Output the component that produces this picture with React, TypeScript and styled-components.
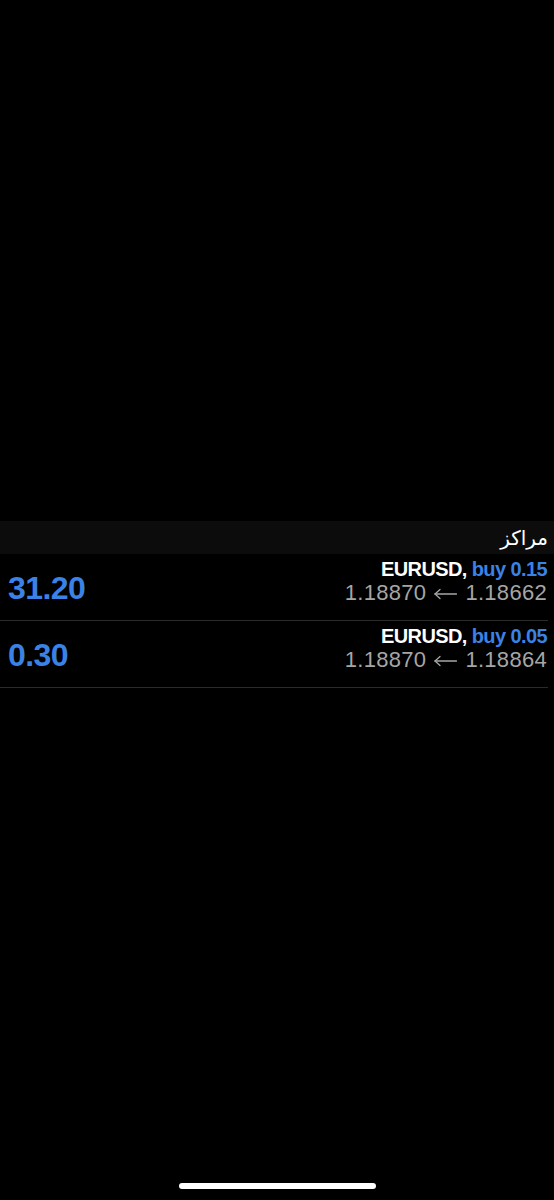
import React from 'react';
import styled, { createGlobalStyle } from 'styled-components';

const GlobalStyle = createGlobalStyle`
  html, body {
    margin: 0;
    padding: 0;
    background: #000;
  }
`;

const Screen = styled.div`
  width: 554px;
  height: 1200px;
  background: #000;
  display: flex;
  flex-direction: column;
  font-family: "Liberation Sans", Arial, sans-serif;
  overflow: hidden;
`;

const TopSpace = styled.div`
  height: 521px;
  flex-shrink: 0;
`;

const SectionHeader = styled.div`
  height: 33px;
  background: #0c0c0c;
  display: flex;
  align-items: center;
  justify-content: flex-end;
  padding-right: 6px;
  color: #fff;
  font-family: "DejaVu Sans", "Noto Sans", sans-serif;
  font-size: 20px;
`;

const Row = styled.div`
  height: 66px;
  margin-right: 6px;
  padding-left: 8px;
  padding-right: 1px;
  border-bottom: 1px solid #2b2b2b;
  display: flex;
  align-items: center;
  justify-content: space-between;
`;

const Profit = styled.div`
  color: #3b82e6;
  font-weight: bold;
  font-size: 32px;
  letter-spacing: -0.6px;
  padding-top: 2px;
`;

const Info = styled.div`
  align-self: flex-start;
  padding-top: 4px;
  display: flex;
  flex-direction: column;
  align-items: flex-end;
`;

const Title = styled.div`
  font-weight: bold;
  font-size: 20px;
  letter-spacing: -0.6px;
  color: #fff;
  line-height: 23px;
`;

const Side = styled.span`
  color: #3b82e6;
`;

const Prices = styled.div`
  display: flex;
  align-items: center;
  gap: 8px;
  font-size: 22px;
  letter-spacing: 0.3px;
  color: #a6a6a6;
  line-height: 24px;
`;

const Arrow = styled.svg`
  width: 23px;
  height: 12px;
  flex-shrink: 0;
  margin-top: 1px;
`;

const HomeBar = styled.div`
  margin-top: auto;
  margin-bottom: 11px;
  align-self: center;
  width: 197px;
  height: 6px;
  border-radius: 3px;
  background: #fff;
`;

type Position = {
  profit: string;
  symbol: string;
  volume: string;
  open: string;
  current: string;
};

const positions: Position[] = [
  { profit: '31.20', symbol: 'EURUSD', volume: '0.15', open: '1.18662', current: '1.18870' },
  { profit: '0.30', symbol: 'EURUSD', volume: '0.05', open: '1.18864', current: '1.18870' },
];

const LeftArrow = () => (
  <Arrow viewBox="0 0 23 12" fill="none" stroke="#a6a6a6" strokeWidth="1.3" strokeLinecap="round">
    <path d="M1 6H22.5" />
    <path d="M6 1.5L1 6L6 10.5" />
  </Arrow>
);

const App = () => {
  return (
    <>
      <GlobalStyle />
      <Screen>
        <TopSpace />
        <SectionHeader>مراكز</SectionHeader>
        {positions.map((p, i) => (
          <Row key={i}>
            <Profit>{p.profit}</Profit>
            <Info>
              <Title>
                {p.symbol}, <Side>buy {p.volume}</Side>
              </Title>
              <Prices>
                <span>{p.current}</span>
                <LeftArrow />
                <span>{p.open}</span>
              </Prices>
            </Info>
          </Row>
        ))}
        <HomeBar />
      </Screen>
    </>
  );
};

export default App;
